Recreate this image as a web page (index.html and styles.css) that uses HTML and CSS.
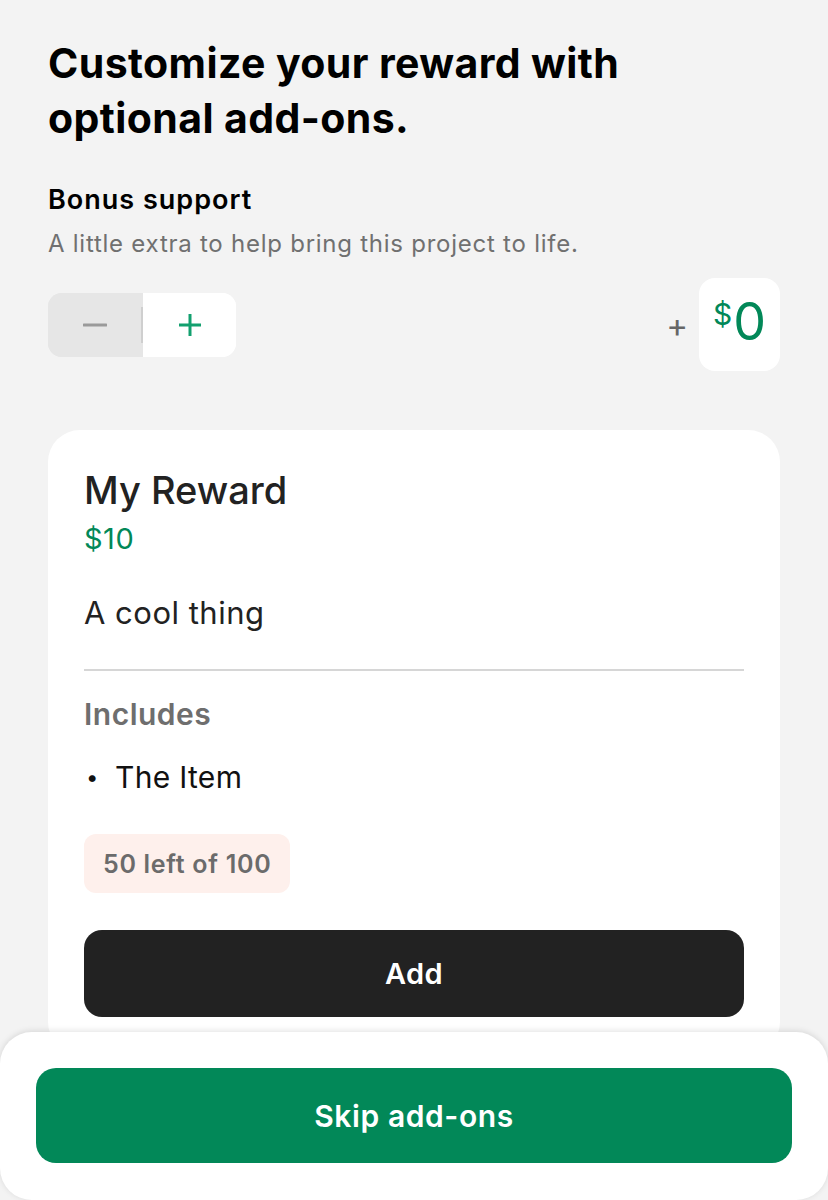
FILE: index.html
```html
<!DOCTYPE html>
<html lang="en">
<head>
<meta charset="utf-8">
<title>Add-ons</title>
<link rel="stylesheet" href="styles.css">
</head>
<body>
<main class="page">
  <h1 class="title">Customize your reward with optional add-ons.</h1>
  <h2 class="bonus-title">Bonus support</h2>
  <p class="bonus-sub">A little extra to help bring this project to life.</p>
  <div class="bonus-row">
    <div class="stepper">
      <button class="step step-minus" aria-label="Decrease">
        <svg width="24" height="24" viewBox="0 0 24 24"><path d="M1 12h22" stroke="#9a9a9a" stroke-width="3" stroke-linecap="round"/></svg>
      </button>
      <span class="step-div"></span>
      <button class="step step-plus" aria-label="Increase">
        <svg width="24" height="24" viewBox="0 0 24 24"><path d="M1 12h22M12 1v22" stroke="#13a06f" stroke-width="3" stroke-linecap="butt"/></svg>
      </button>
    </div>
    <div class="amount">
      <span class="amount-plus">+</span>
      <div class="amount-box"><span class="cur">$</span><span class="val">0</span></div>
    </div>
  </div>

  <section class="card">
    <h3 class="reward-name">My Reward</h3>
    <div class="reward-price">$10</div>
    <p class="reward-desc">A cool thing</p>
    <hr class="divider">
    <h4 class="includes">Includes</h4>
    <ul class="items">
      <li class="item"><span class="dot">•</span>The Item</li>
    </ul>
    <span class="badge">50 left of 100</span>
    <button class="add-btn">Add</button>
  </section>
</main>
<footer class="bottom">
  <button class="skip-btn">Skip add-ons</button>
</footer>
</body>
</html>
```
FILE: styles.css
```css
* { box-sizing: border-box; }
html, body { margin: 0; padding: 0; }
body {
  background: #f3f3f3;
  font-family: Inter, "Noto Sans", "Liberation Sans", sans-serif;
  color: #000;
  width: 828px;
  height: 1200px;
  overflow: hidden;
}
.page {
  padding: 36px 48px 0 48px;
}
.title {
  margin: 0;
  font-size: 41px;
  line-height: 55px;
  font-weight: 700;
  letter-spacing: 0.4px;
  width: 640px;
}
.bonus-title {
  margin: 38px 0 0 0;
  font-size: 27px;
  line-height: 32px;
  font-weight: 600;
  letter-spacing: 1px;
}
.bonus-sub {
  margin: 13px 0 0 0;
  font-size: 24px;
  line-height: 30px;
  letter-spacing: 0.75px;
  color: #707070;
}
.bonus-row {
  margin-top: 19px;
  display: flex;
  align-items: center;
  justify-content: space-between;
}
.stepper {
  display: flex;
  align-items: center;
  width: 188px;
  height: 64px;
  border-radius: 14px;
  overflow: hidden;
  background: linear-gradient(90deg, #e6e6e6 0 95px, #fff 95px);
}
.step {
  border: 0;
  padding: 0;
  height: 64px;
  display: flex;
  align-items: center;
  justify-content: center;
}
.step-minus { width: 93px; background: #e6e6e6; }
.step-plus { flex: 1; background: #fff; }
.step-div { width: 2px; height: 36px; background: #cfcfcf; align-self: center; }
.amount {
  display: flex;
  align-items: center;
  gap: 11px;
}
.amount-plus {
  font-size: 33px;
  color: #666;
  line-height: 1;
  margin-top: 2px;
}
.amount-box {
  width: 81px;
  height: 93px;
  background: #fff;
  border-radius: 16px;
  display: flex;
  align-items: flex-start;
  justify-content: center;
  padding-top: 18px;
  color: #028858;
}
.cur { font-size: 30px; line-height: 1; margin-top: 3px; margin-right: 1px; }
.val { font-size: 52px; line-height: 1; font-weight: 400; }

.card {
  margin-top: 59px;
  background: #fff;
  border-radius: 32px;
  padding: 37px 36px 37px 36px;
  display: flex;
  flex-direction: column;
  align-items: flex-start;
}
.reward-name {
  margin: 0;
  font-size: 38px;
  line-height: 46px;
  font-weight: 500;
  color: #222;
}
.reward-price {
  margin-top: 9px;
  font-size: 29px;
  line-height: 34px;
  letter-spacing: 0.5px;
  color: #028858;
}
.reward-desc {
  margin: 38px 0 0 0;
  font-size: 31px;
  line-height: 38px;
  letter-spacing: 0.5px;
  color: #222;
}
.divider {
  margin: 37px 0 0 0;
  width: 100%;
  border: 0;
  height: 2px;
  background: #d6d6d6;
}
.includes {
  margin: 24px 0 0 0;
  font-size: 30px;
  line-height: 38px;
  font-weight: 600;
  letter-spacing: 0.5px;
  color: #6e6e6e;
}
.items {
  list-style: none;
  margin: 26px 0 0 0;
  padding: 0;
}
.item {
  font-size: 30px;
  line-height: 36px;
  letter-spacing: 0.3px;
  color: #111;
  display: flex;
}
.dot {
  width: 31px;
  padding-left: 2px;
  font-size: 22px;
}
.badge {
  margin-top: 39px;
  height: 59px;
  display: flex;
  align-items: center;
  padding: 0 19px;
  background: #fef0ec;
  border-radius: 12px;
  font-size: 25px;
  font-weight: 600;
  letter-spacing: 0.7px;
  color: #6b6b6b;
}
.add-btn {
  margin-top: 37px;
  width: 100%;
  height: 87px;
  border: 0;
  border-radius: 18px;
  background: #222;
  color: #fff;
  font-family: inherit;
  font-size: 29px;
  font-weight: 600;
  letter-spacing: 0.3px;
}
.bottom {
  position: fixed;
  left: 0;
  right: 0;
  bottom: 0;
  height: 168px;
  background: #fff;
  border-radius: 32px;
  box-shadow: 0 -1px 6px rgba(0, 0, 0, 0.12);
  padding: 36px 36px 0 36px;
}
.skip-btn {
  width: 100%;
  height: 95px;
  border: 0;
  border-radius: 20px;
  background: #028858;
  color: #fff;
  font-family: inherit;
  font-size: 30px;
  font-weight: 600;
  letter-spacing: 0.6px;
}
```
